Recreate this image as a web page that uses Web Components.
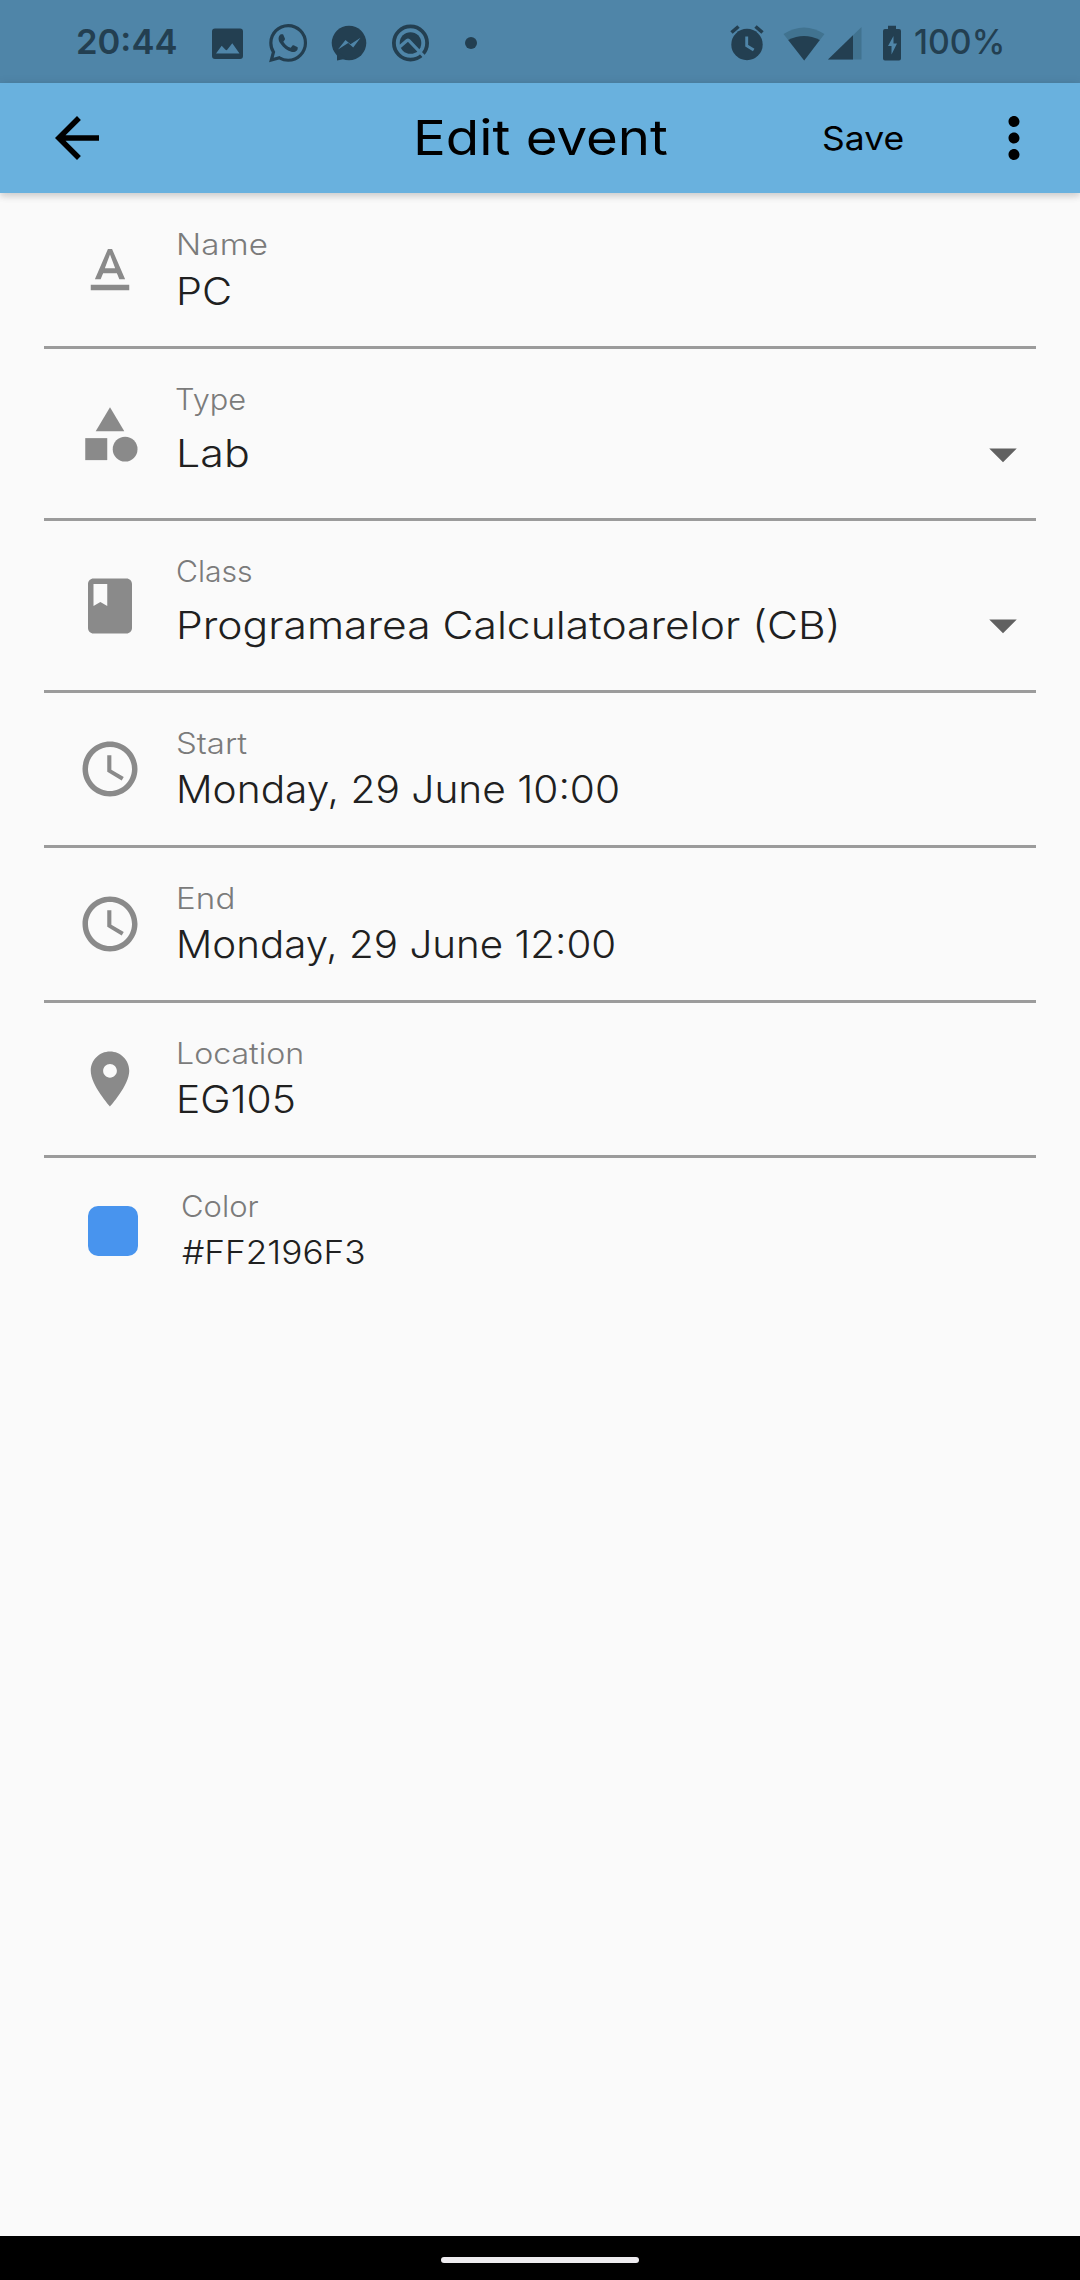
<!DOCTYPE html>
<html lang="en">
<head>
<meta charset="utf-8">
<title>Edit event</title>
<style>
html,body{margin:0;padding:0;background:#fafafa}
body{font-family:Inter,"Open Sans",sans-serif;width:1080px;height:2280px;overflow:hidden}
</style>
</head>
<body>
<event-screen></event-screen>
<script>
const define = (name, html, setup) => customElements.define(name, class extends HTMLElement {
  constructor() {
    super();
    this.attachShadow({ mode: 'open' }).innerHTML = html;
  }
  connectedCallback() { if (setup) setup.call(this, this.shadowRoot); }
});

/* Text widened and tracked so the inked glyphs span `ink` pixels, starting `lead` pixels in. */
const ctx = document.createElement('canvas').getContext('2d');
define('tracked-text', '<style>:host{display:block;flex:none}span{display:block;white-space:pre;width:max-content;transform-origin:0 50%}</style><span></span>', function (root) {
  const text = this.getAttribute('text'), size = +this.getAttribute('size');
  const weight = this.getAttribute('weight') || 400, line = +this.getAttribute('line');
  const lead = +(this.getAttribute('lead') || 0), ink = +this.getAttribute('ink');
  ctx.font = `${weight} ${size}px Inter, "Open Sans", sans-serif`;
  const m = ctx.measureText(text);
  const natural = m.actualBoundingBoxLeft + m.actualBoundingBoxRight;
  const stretch = Math.min(1.13, Math.max(.95, ink / natural));
  const spacing = (ink / stretch - natural) / (text.length - 1);
  const span = root.querySelector('span');
  span.textContent = text;
  span.style.cssText = `font:${weight} ${size}px/${line}px Inter,"Open Sans",sans-serif;` +
    `letter-spacing:${spacing.toFixed(3)}px;transform:scaleX(${stretch.toFixed(4)});` +
    `margin-left:${(lead + m.actualBoundingBoxLeft * stretch).toFixed(2)}px`;
  this.style.width = lead + ink + 'px';
  this.style.height = line + 'px';
});

const icons = {
  back: '<path d="M20 11H7.83l5.59-5.59L12 4l-8 8 8 8 1.41-1.41L7.83 13H20v-2z"/>',
  more: '<path d="M12 8c1.1 0 2-.9 2-2s-.9-2-2-2-2 .9-2 2 .9 2 2 2zm0 2c-1.1 0-2 .9-2 2s.9 2 2 2 2-.9 2-2-.9-2-2-2zm0 6c-1.1 0-2 .9-2 2s.9 2 2 2 2-.9 2-2-.9-2-2-2z"/>',
  format: '<path d="M5 17v2h14v-2H5zm4.500-4.200h5l.900 2.200h2.100L12.750 4h-1.500L6.500 15h2.100l.900-2.200zM12 5.980L13.870 11h-3.740L12 5.980z"/>',
  category: '<path d="M12 2.300l-5.200 8.700h10.400z"/><circle cx="17.500" cy="17.500" r="4.500"/><path d="M3 13.500h8v8H3z"/>',
  book: '<path d="M18 2H6c-1.100 0-2 .9-2 2v16c0 1.100.9 2 2 2h12c1.100 0 2-.9 2-2V4c0-1.100-.9-2-2-2zM6 4h5v8l-2.500-1.500L6 12V4z"/>',
  clock: '<path d="M11.990 2C6.470 2 2 6.480 2 12s4.470 10 9.990 10C17.520 22 22 17.520 22 12S17.520 2 11.990 2zM12 20c-4.420 0-8-3.580-8-8s3.580-8 8-8 8 3.580 8 8-3.580 8-8 8zm.5-13H11v6l5.250 3.150.75-1.230-4.500-2.670z"/>',
  place: '<path d="M12 2C8.130 2 5 5.130 5 9c0 5.250 7 13 7 13s7-7.750 7-13c0-3.870-3.130-7-7-7zm0 9.500c-1.380 0-2.500-1.120-2.500-2.500s1.120-2.500 2.500-2.500 2.500 1.120 2.500 2.500-1.120 2.500-2.500 2.500z"/>',
  drop: '<path d="M7 10l5 5 5-5z"/>'
};
define('md-icon', `
<style>:host{display:block;width:66px;height:66px;flex:none}svg{display:block;width:66px;height:66px;fill:currentColor}</style>
<svg viewBox="0 0 24 24"></svg>`, function (root) {
  root.querySelector('svg').innerHTML = icons[this.getAttribute('name')];
});

const statusIcons = {
  image: '<path fill-rule="evenodd" d="M7 5.500h25a3 3 0 0 1 3 3V33a3 3 0 0 1-3 3H7a3 3 0 0 1-3-3V8.500a3 3 0 0 1 3-3zM8 30.500h23.500l-7.200-10.200-5.500 7-1.300-.6-3.800-4z"/>',
  whatsapp: '<g transform="translate(1 1) scale(1.590)"><path d="M17.472 14.382c-.297-.149-1.758-.867-2.030-.967-.273-.099-.471-.148-.670.150-.197.297-.767.966-.940 1.164-.173.199-.347.223-.644.075-.297-.150-1.255-.463-2.390-1.475-.883-.788-1.480-1.761-1.653-2.059-.173-.297-.018-.458.130-.606.134-.133.298-.347.446-.520.149-.174.198-.298.298-.497.099-.198.050-.371-.025-.520-.075-.149-.669-1.612-.916-2.207-.242-.579-.487-.500-.669-.510-.173-.008-.371-.010-.570-.010-.198 0-.520.074-.792.372-.272.297-1.040 1.016-1.040 2.479 0 1.462 1.065 2.875 1.213 3.074.149.198 2.096 3.200 5.077 4.487.709.306 1.262.489 1.694.625.712.227 1.360.195 1.871.118.571-.085 1.758-.719 2.006-1.413.248-.694.248-1.289.173-1.413-.074-.124-.272-.198-.570-.347m-5.421 7.403h-.004a9.870 9.870 0 0 1-5.031-1.378l-.361-.214-3.741.982.998-3.648-.235-.374a9.860 9.860 0 0 1-1.510-5.260c.001-5.450 4.436-9.884 9.888-9.884 2.640 0 5.122 1.030 6.988 2.898a9.825 9.825 0 0 1 2.893 6.994c-.003 5.450-4.437 9.884-9.885 9.884m8.413-18.297A11.815 11.815 0 0 0 12.050 0C5.495 0 .160 5.335.157 11.892c0 2.096.547 4.142 1.588 5.945L.057 24l6.305-1.654a11.882 11.882 0 0 0 5.683 1.448h.005c6.554 0 11.890-5.335 11.893-11.893a11.821 11.821 0 0 0-3.480-8.413z"/></g>',
  messenger: '<circle cx="20" cy="20" r="17.300"/><path d="M8 28v9.500l10-2z"/><path fill="var(--bar)" d="M9 26.500l7.500-9.500 5 4.300 10-6.500-7.300 9.700-5-4.500z"/>',
  lens: '<circle cx="20.500" cy="20" r="16.600" fill="none" stroke="currentColor" stroke-width="3.800"/><circle cx="20.500" cy="20" r="10.800"/><path d="M9.500 24l7.500-6.500q1-.8 2 .1L36.500 36" fill="none" stroke="var(--bar)" stroke-width="3.200"/>',
  dot: '<circle cx="20" cy="20" r="6"/>',
  alarm: '<circle cx="20" cy="21.500" r="15.700"/><path d="M4.500 9.500l7-6M35.500 9.500l-7-6" stroke="currentColor" stroke-width="3.600"/><path d="M19.700 13.500v9.300l7 4.300" fill="none" stroke="var(--bar)" stroke-width="2.900"/>',
  wifi: '<path fill="var(--faint)" d="M-.5 11Q20 -2 40.500 11L20.200 37.500z"/><path d="M4.200 17Q20 9 35.800 17L20.200 37.500z"/>',
  signal: '<path fill="var(--faint)" d="M36.500 4v32.500H3z"/><path d="M28 12.300v24.200H3z"/>',
  battery: '<path fill-rule="evenodd" d="M16 2.700h8v3.300h3a2 2 0 0 1 2 2v27.500a2 2 0 0 1-2 2H13a2 2 0 0 1-2-2V8a2 2 0 0 1 2-2h3zM21.500 13l-5.500 10h3.500v8.500L25 20.500h-3.500z"/>'
};
define('status-icon', `
<style>:host{display:block;width:40px;height:40px;flex:none}svg{display:block;width:40px;height:40px;overflow:visible;fill:currentColor}</style>
<svg viewBox="0 0 40 40"></svg>`, function (root) {
  root.querySelector('svg').innerHTML = statusIcons[this.getAttribute('name')];
});

define('status-bar', `
<style>
:host{--bar:#4f85a8;--faint:#417390;display:flex;align-items:flex-start;justify-content:space-between;box-sizing:border-box;height:83px;padding:23px 78px 0 78px;background:var(--bar);color:#233f51}
div{display:flex;align-items:flex-start}
.l status-icon{margin-right:20.900px}.l tracked-text{margin-right:31px}
.r tracked-text{margin-left:3px}
</style>
<div class="l">
<tracked-text text="20:44" size="34.500" weight="600" line="38" ink="98.500"></tracked-text>
<status-icon name="image"></status-icon><status-icon name="whatsapp"></status-icon><status-icon name="messenger"></status-icon><status-icon name="lens"></status-icon><status-icon name="dot"></status-icon>
</div>
<div class="r">
<status-icon name="alarm" style="margin-right:17px"></status-icon><status-icon name="wifi" style="margin-right:1px"></status-icon><status-icon name="signal" style="margin-right:7.500px"></status-icon><status-icon name="battery"></status-icon>
<tracked-text text="100%" size="34.500" weight="500" line="38" lead="0" ink="87"></tracked-text>
</div>`);

define('app-bar', `
<style>
:host{display:flex;align-items:center;height:109.500px;box-sizing:border-box;padding:0 33px 0 44px;background:#69b1de;color:#000;box-shadow:0 4px 6px rgba(0,0,0,.11),0 1px 10px rgba(0,0,0,.10);position:relative;z-index:1}
.t{margin-left:307px}.s{margin:2px 0 0 156.500px}md-icon:last-child{margin-left:auto}
</style>
<md-icon name="back"></md-icon>
<tracked-text class="t" text="Edit event" size="48.500" weight="400" line="60" ink="249.500"></tracked-text>
<tracked-text class="s" text="Save" size="32.500" weight="400" line="48" ink="80"></tracked-text>
<md-icon name="more"></md-icon>`);

/* One form row: icon slot, label and value slots, optional trailing control. */
define('form-row', `
<style>
:host{display:flex;align-items:flex-start;box-sizing:border-box;height:155px;margin:0 44px;padding:31.500px 0 0 33px;border-bottom:3px solid #9b9b9b}
:host([first]){height:156.500px;padding-top:33.500px}
:host([select]){height:172px}
:host([last]){border:0;padding-left:44px;padding-top:30px}
.i{color:#8a8a8a;margin:11.500px 33px 0 0;width:66px;flex:none}
:host([select]) .i{margin-top:20.500px}
:host([last]) .i{margin-top:18px;width:60.500px}
.c{flex:1;display:flex;flex-direction:column;gap:3px;padding-top:1px}
:host([first]) .c{gap:4px}
:host([select]) .c{gap:11px}
:host([last]) .c{gap:7px}
::slotted([slot=label]){color:#7b7b7b}
::slotted([slot=value]){color:#202020}
.e{color:#616161;margin-top:39.500px}
:host([icon=category]) .e{margin-top:40px}
</style>
<div class="i"><slot name="icon"></slot></div>
<div class="c"><slot name="label"></slot><slot name="value"></slot></div>
<div class="e"><slot name="end"></slot></div>`);

define('color-swatch', `<style>:host{display:block;width:50px;height:50px;border-radius:10px;background:#4894ee}</style>`);

define('nav-bar', `
<style>:host{display:flex;justify-content:center;box-sizing:border-box;height:44px;padding-top:21px;background:#000}
div{width:198px;height:6px;border-radius:3px;background:#eeecef}</style><div></div>`);

const rows = [
  { icon: 'format', label: ['Name', 1.8, 88.5], value: ['PC', 3.5, 51], flag: 'first' },
  { icon: 'category', label: ['Type', .3, 69], value: ['Lab', 3.3, 68.3], flag: 'select' },
  { icon: 'book', label: ['Class', 1, 74.5], value: ['Programarea Calculatoarelor (CB)', 3.5, 657.5], flag: 'select' },
  { icon: 'clock', label: ['Start', 1, 70.3], value: ['Monday, 29 June 10:00', 3.5, 439.3] },
  { icon: 'clock', label: ['End', 2.4, 55.2], value: ['Monday, 29 June 12:00', 3.5, 435.5] },
  { icon: 'place', label: ['Location', 2.2, 123.5], value: ['EG105', 3.7, 115] },
  { label: ['Color', .9, 76], value: ['#FF2196F3', .9, 181.5], flag: 'last' }
];
const text = (slot, [t, lead, ink], size, line) =>
  `<tracked-text slot="${slot}" text="${t}" size="${size}" line="${line}" weight="300" lead="${lead}" ink="${ink}"></tracked-text>`;
define('event-form', `
<style>:host{display:flex;flex-direction:column;flex:1}</style>` +
rows.map(r => `<form-row ${r.flag || ''} icon="${r.icon || ''}">` +
  (r.icon ? `<md-icon slot="icon" name="${r.icon}"></md-icon>` : '<color-swatch slot="icon"></color-swatch>') +
  text('label', r.label, 29.3, 36) +
  (r.flag === 'last' ? text('value', r.value, 33, 40) : text('value', r.value, 38, 48)) +
  (r.flag === 'select' ? '<md-icon slot="end" name="drop"></md-icon>' : '') +
  '</form-row>').join(''));

define('event-screen', `
<style>:host{display:flex;flex-direction:column;width:1080px;height:2280px;background:#fafafa}</style>
<status-bar></status-bar><app-bar></app-bar><event-form></event-form><nav-bar></nav-bar>`);
</script>
</body>
</html>
